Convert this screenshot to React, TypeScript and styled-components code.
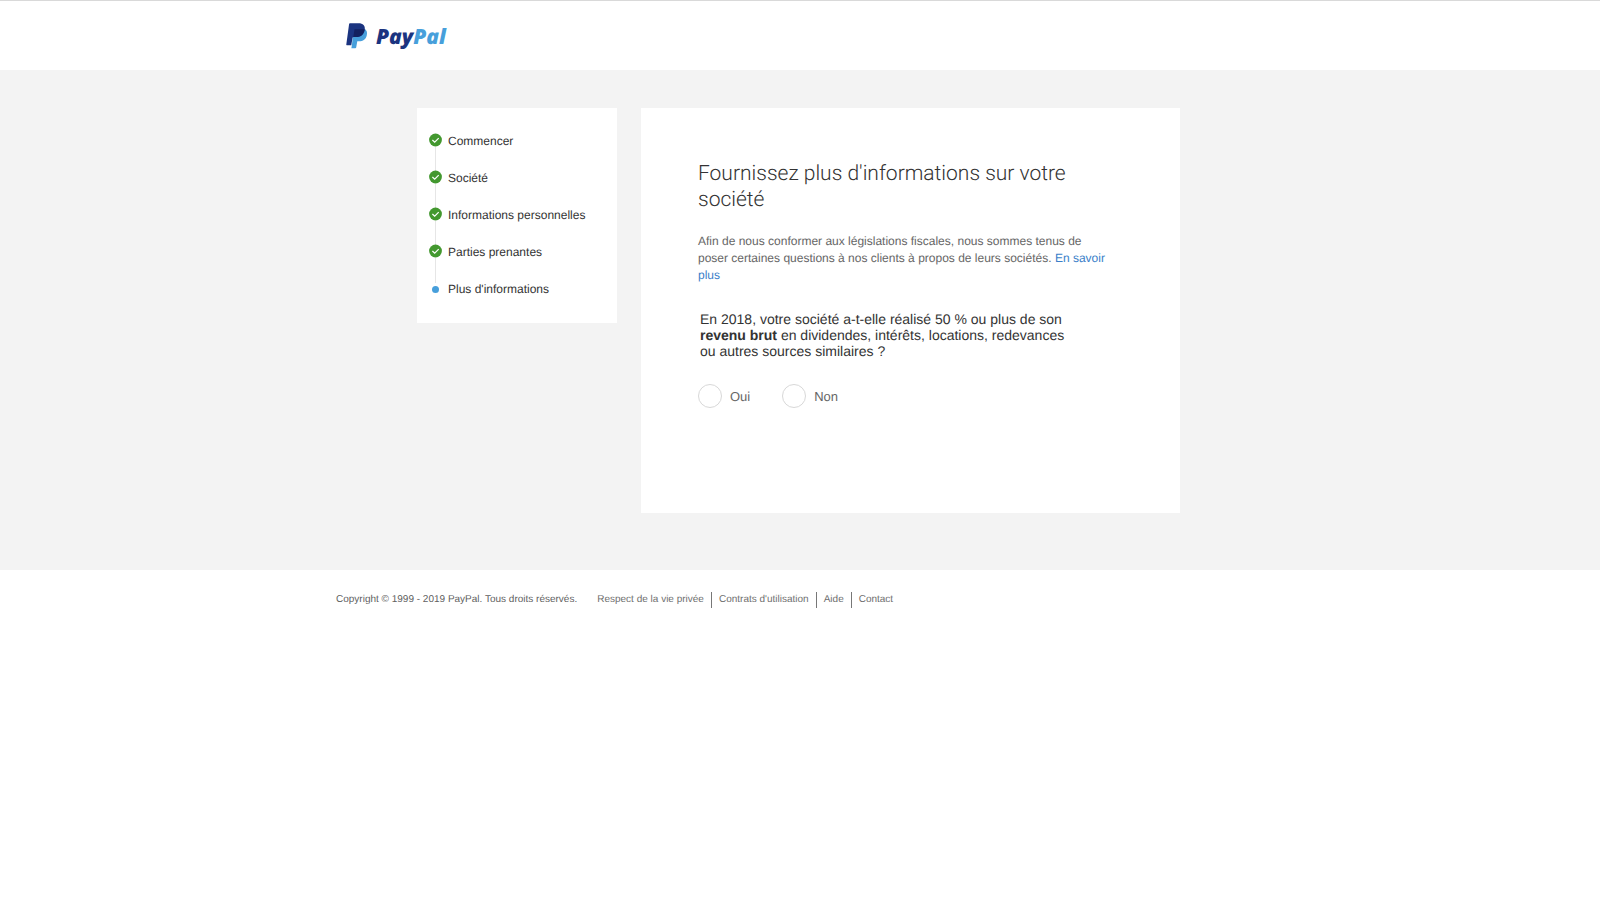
import React from 'react';
import styled, { createGlobalStyle } from 'styled-components';

const GlobalStyle = createGlobalStyle`
  *, *::before, *::after { box-sizing: border-box; }
  body {
    margin: 0;
    background: #fff;
    color: #333;
    font-family: "Liberation Sans", Arial, Helvetica, sans-serif;
    font-size: 12px;
    text-rendering: geometricPrecision;
  }
`;

const Header = styled.header`
  border-top: 1px solid #d9d9d9;
  background: #fff;
`;

const Container = styled.div`
  max-width: 928px;
  margin: 0 auto;
`;

const HeaderInner = styled(Container)`
  display: flex;
  height: 69px;
  padding: 22px 10px 0;
`;

const LogoLink = styled.a`
  display: flex;
  gap: 8px;
  height: 26px;
  text-decoration: none;
`;

const Wordmark = styled.span`
  color: #1b3480;
  font: italic 800 21px/28px "Open Sans", "Liberation Sans", sans-serif;
`;

const WordmarkLight = styled.span`
  color: #479fdb;
`;

const Page = styled.main`
  background: #f3f3f3;
  padding: 38px 0 57px;
`;

const Columns = styled.div`
  display: grid;
  grid-template-columns: 200px minmax(0, 539px);
  gap: 24px;
  align-items: start;
  max-width: 766px;
  margin: 0 auto;
`;

const Sidebar = styled.nav`
  background: #fff;
  padding: 23px 12px 24px;
`;

const Steps = styled.ol`
  list-style: none;
  margin: 0;
  padding: 0;
`;

const Step = styled.li`
  position: relative;
  display: flex;
  align-items: center;
  gap: 6px;
  padding-bottom: 17px;
  line-height: 20px;

  &:last-child { padding-bottom: 0; }

  &:not(:last-child)::after {
    content: "";
    position: absolute;
    left: 6px;
    top: 16px;
    bottom: -4px;
    width: 1px;
    background: #e6e6e6;
  }
`;

const StepMark = styled.svg`
  display: block;
  flex: none;
`;

const Card = styled.section`
  background: #fff;
  min-height: 405px;
  padding: 53px 57px;
`;

const Title = styled.h1`
  max-width: 400px;
  margin: 0 0 20px;
  color: #333;
  font: 300 21px/26px Roboto, "Liberation Sans", sans-serif;
`;

const Intro = styled.p`
  max-width: 414px;
  margin: 0;
  color: #666;
  line-height: 17px;
`;

const TextLink = styled.a`
  color: #3b7fc9;
  text-decoration: none;
`;

const Question = styled.fieldset`
  margin: 27px 0 0;
  padding: 0;
  border: 0;
  min-width: 0;
`;

const Legend = styled.legend`
  max-width: 384px;
  padding: 0 2px;
  color: #333;
  font-size: 14px;
  line-height: 16px;
`;

const Options = styled.div`
  display: flex;
  gap: 32px;
  margin-top: 25px;
`;

const Option = styled.label`
  display: flex;
  align-items: center;
  gap: 8px;
  color: #666;
  font-size: 13px;
`;

const Radio = styled.input`
  appearance: none;
  width: 24px;
  height: 24px;
  margin: 0;
  border: 1px solid #d8d8d8;
  border-radius: 50%;
  background: #fff;

  &:checked { border: 7px solid #479fdb; }
`;

const FooterInner = styled(Container)`
  display: flex;
  flex-wrap: wrap;
  align-items: center;
  gap: 20px;
  padding: 22px 0;
  color: #5f5f5f;
  font-size: 10px;
  line-height: 16px;
`;

const FooterLinks = styled.ul`
  display: flex;
  list-style: none;
  margin: 0;
  padding: 0;
`;

const FooterItem = styled.li`
  & + & {
    margin-left: 7px;
    padding-left: 7px;
    border-left: 1px solid #777;
  }
`;

const FooterLink = styled.a`
  color: #6f6f6f;
  text-decoration: none;
`;

function Monogram() {
  return (
    <svg width="22" height="26" viewBox="0 0 22 26" aria-hidden="true">
      <path d="M7.6 5.800h10.700c2.400 1 3.200 3.200 2.500 6.400-.9 4.200-3.700 6.100-7.800 6.100h-1.700l-1.100 6.100c-.1.500-.4.800-.9.800H5.400l.6-4z" fill="#479fdb" />
      <path d="M3.900.2h8.600c4.500 0 7 2.300 6.200 6.700-.9 4.900-4.100 7.200-8.800 7.200H7.600c-.6 0-1 .3-1.100.9L5.300 22.200H.8c-.4 0-.6-.3-.5-.7L3.100.9c.1-.4.400-.7.800-.7z" fill="#1b3480" />
      <path d="M8.500 6.200h8c.8 0 1.500.1 2.100.4-.8 5.100-4 7.500-8.700 7.500H7.300L8.500 6.200z" fill="#13215f" />
    </svg>
  );
}

function Mark({ done }: { done: boolean }) {
  return (
    <StepMark width="13" height="20" viewBox="0 0 13 20" aria-hidden="true">
      {done ? (
        <>
          <circle cx="6.500" cy="9" r="6.400" fill="#43982f" />
          <path d="M3.400 9l2.300 2.200 4-4" fill="none" stroke="#fff" strokeWidth="1.200" />
        </>
      ) : (
        <circle cx="6.500" cy="10.500" r="3.500" fill="#479fdb" />
      )}
    </StepMark>
  );
}

const steps = [
  { label: 'Commencer', done: true },
  { label: 'Société', done: true },
  { label: 'Informations personnelles', done: true },
  { label: 'Parties prenantes', done: true },
  { label: "Plus d'informations", done: false },
];

const footerLinks = ['Respect de la vie privée', "Contrats d'utilisation", 'Aide', 'Contact'];

export default function App() {
  return (
    <>
      <GlobalStyle />
      <Header>
        <HeaderInner>
          <LogoLink href="#">
            <Monogram />
            <Wordmark>Pay<WordmarkLight>Pal</WordmarkLight></Wordmark>
          </LogoLink>
        </HeaderInner>
      </Header>
      <Page>
        <Columns>
          <Sidebar>
            <Steps>
              {steps.map((step) => (
                <Step key={step.label} aria-current={step.done ? undefined : 'step'}>
                  <Mark done={step.done} />
                  {step.label}
                </Step>
              ))}
            </Steps>
          </Sidebar>
          <Card>
            <Title>Fournissez plus d'informations sur votre société</Title>
            <Intro>
              Afin de nous conformer aux législations fiscales, nous sommes tenus de poser certaines
              questions à nos clients à propos de leurs sociétés.{' '}
              <TextLink href="#">En savoir plus</TextLink>
            </Intro>
            <Question>
              <Legend>
                En 2018, votre société a-t-elle réalisé 50 % ou plus de son <strong>revenu brut</strong> en
                dividendes, intérêts, locations, redevances ou autres sources similaires ?
              </Legend>
              <Options>
                <Option><Radio type="radio" name="passive-income" value="oui" />Oui</Option>
                <Option><Radio type="radio" name="passive-income" value="non" />Non</Option>
              </Options>
            </Question>
          </Card>
        </Columns>
      </Page>
      <footer>
        <FooterInner>
          <span>Copyright © 1999 - 2019 PayPal. Tous droits réservés.</span>
          <FooterLinks>
            {footerLinks.map((label) => (
              <FooterItem key={label}><FooterLink href="#">{label}</FooterLink></FooterItem>
            ))}
          </FooterLinks>
        </FooterInner>
      </footer>
    </>
  );
}
